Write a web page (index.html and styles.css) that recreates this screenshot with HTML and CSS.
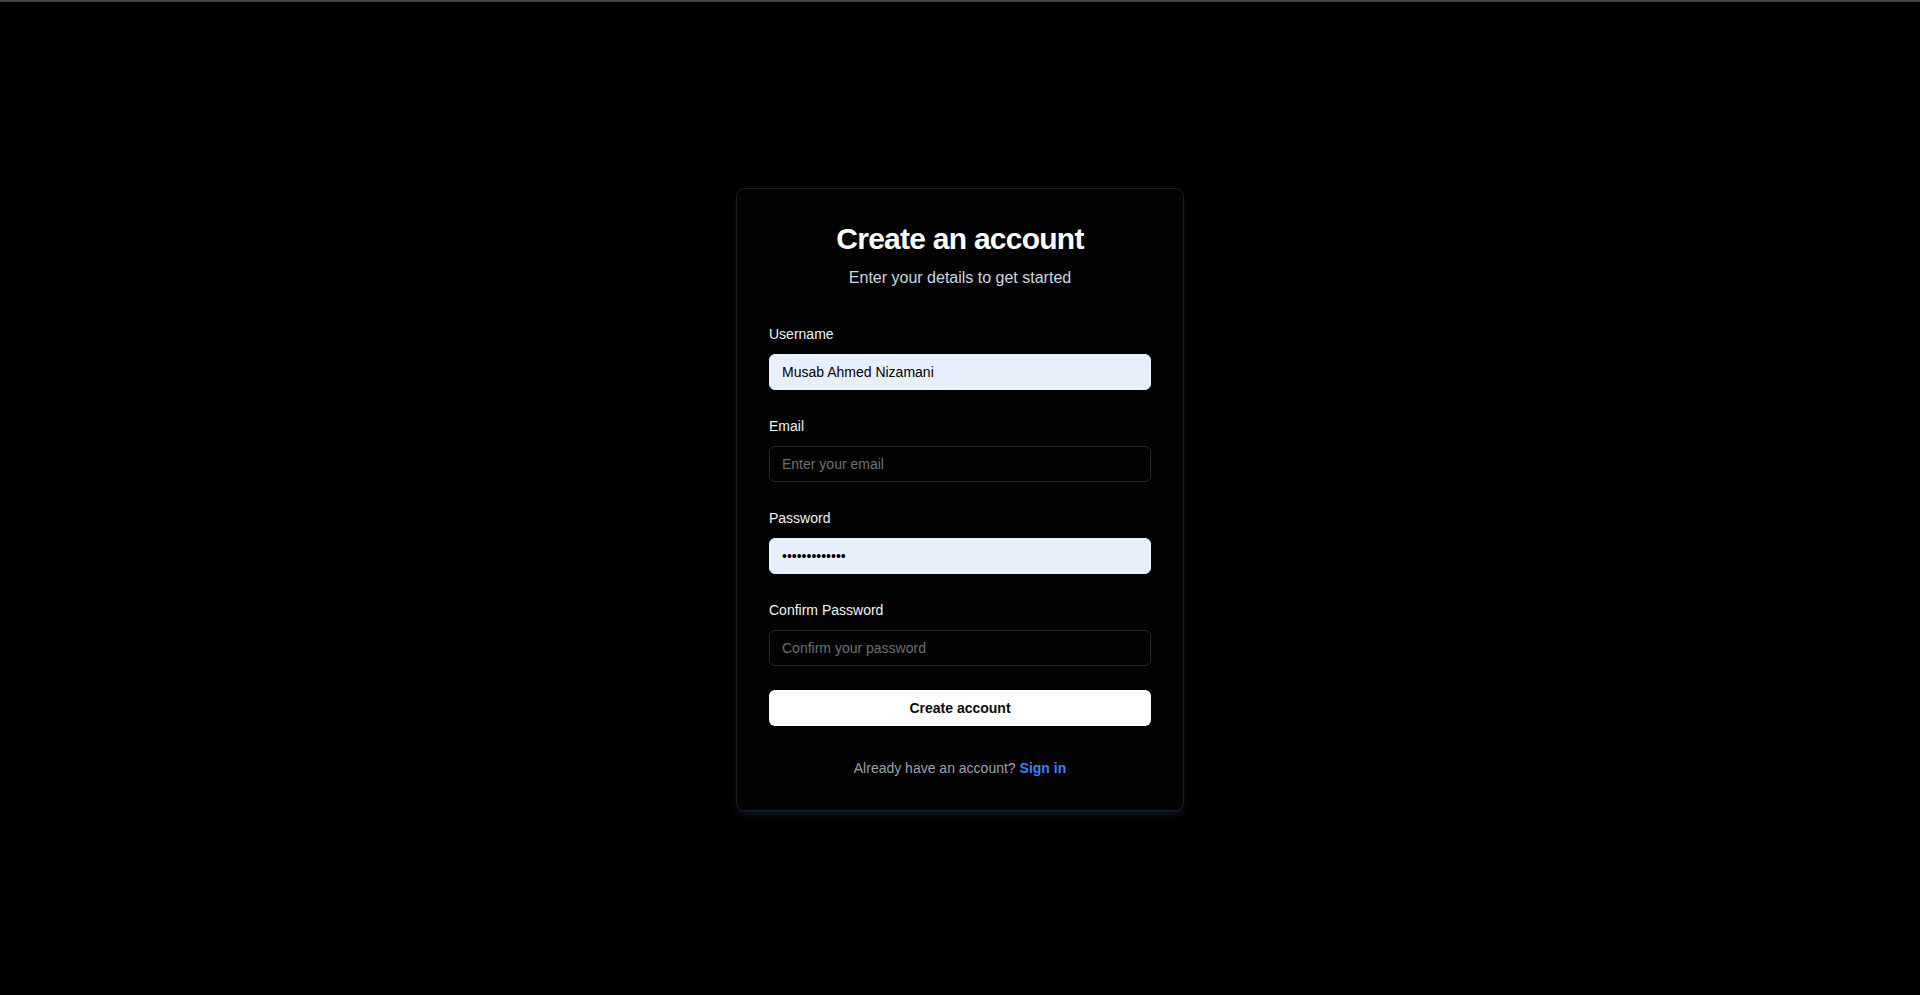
FILE: index.html
```html
<!DOCTYPE html>
<html lang="en">
<head>
<meta charset="utf-8">
<title>Create an account</title>
<link rel="stylesheet" href="styles.css">
</head>
<body>
<div class="topline"></div>
<main class="page">
  <section class="card">
    <header class="card-head">
      <h1 class="title">Create an account</h1>
      <p class="subtitle">Enter your details to get started</p>
    </header>
    <form class="form">
      <div class="field">
        <label class="label" for="username">Username</label>
        <input class="input input-filled" id="username" type="text" value="Musab Ahmed Nizamani">
      </div>
      <div class="field">
        <label class="label" for="email">Email</label>
        <input class="input" id="email" type="email" placeholder="Enter your email">
      </div>
      <div class="field">
        <label class="label" for="password">Password</label>
        <input class="input input-filled" id="password" type="password" value="abcdefghijklm">
      </div>
      <div class="field">
        <label class="label" for="confirm">Confirm Password</label>
        <input class="input" id="confirm" type="password" placeholder="Confirm your password">
      </div>
      <button class="btn" type="button">Create account</button>
    </form>
    <p class="footer">Already have an account? <a class="link" href="#">Sign in</a></p>
  </section>
</main>
</body>
</html>
```

FILE: styles.css
```css
* {
  box-sizing: border-box;
}

html, body {
  margin: 0;
  padding: 0;
  height: 100%;
}

body {
  background: #000000;
  font-family: "Liberation Sans", Arial, sans-serif;
  color: #ffffff;
  display: flex;
  flex-direction: column;
  overflow: hidden;
}

.topline {
  height: 2px;
  flex: none;
  background: #3d4649;
}

.page {
  flex: 1;
  display: flex;
  align-items: center;
  justify-content: center;
  padding-top: 2px;
}

.card {
  width: 448px;
  background: #020203;
  border: 1px solid #161c28;
  border-radius: 8px;
  padding: 32px;
  box-shadow: 0 6px 10px -3px rgba(30, 41, 64, 0.55), 0 3px 6px -4px rgba(30, 41, 64, 0.5);
}

.card-head {
  text-align: center;
  margin-bottom: 32px;
}

.title {
  margin: 0;
  font-size: 30px;
  line-height: 36px;
  font-weight: 700;
  letter-spacing: -0.025em;
  color: #ffffff;
}

.subtitle {
  margin: 9px 0 0;
  font-size: 16px;
  line-height: 24px;
  color: #cdd5e0;
}

.form {
  display: flex;
  flex-direction: column;
  gap: 24px;
}

.field {
  display: flex;
  flex-direction: column;
}

.label {
  font-size: 14px;
  line-height: 24px;
  margin-bottom: 8px;
  color: #f1f3f6;
}

.input {
  height: 36px;
  width: 100%;
  padding: 0 12px;
  border: 1px solid #2a2a2d;
  border-radius: 6px;
  background: transparent;
  color: #ffffff;
  font-family: "Liberation Sans", Arial, sans-serif;
  font-size: 14px;
  outline: none;
}

.input::placeholder {
  color: #6e6e74;
}

.input-filled {
  background: #e8f0fe;
  border-color: #e8f0fe;
  color: #000000;
}

.btn {
  height: 36px;
  width: 100%;
  border: none;
  border-radius: 6px;
  background: #ffffff;
  color: #0a0a0a;
  font-family: "Liberation Sans", Arial, sans-serif;
  font-size: 14px;
  font-weight: 700;
  cursor: pointer;
}

.footer {
  margin: 32px 0 0;
  text-align: center;
  font-size: 14px;
  line-height: 20px;
  color: #9ca0a8;
}

.link {
  color: #3b82f6;
  font-weight: 700;
  text-decoration: none;
}
```
